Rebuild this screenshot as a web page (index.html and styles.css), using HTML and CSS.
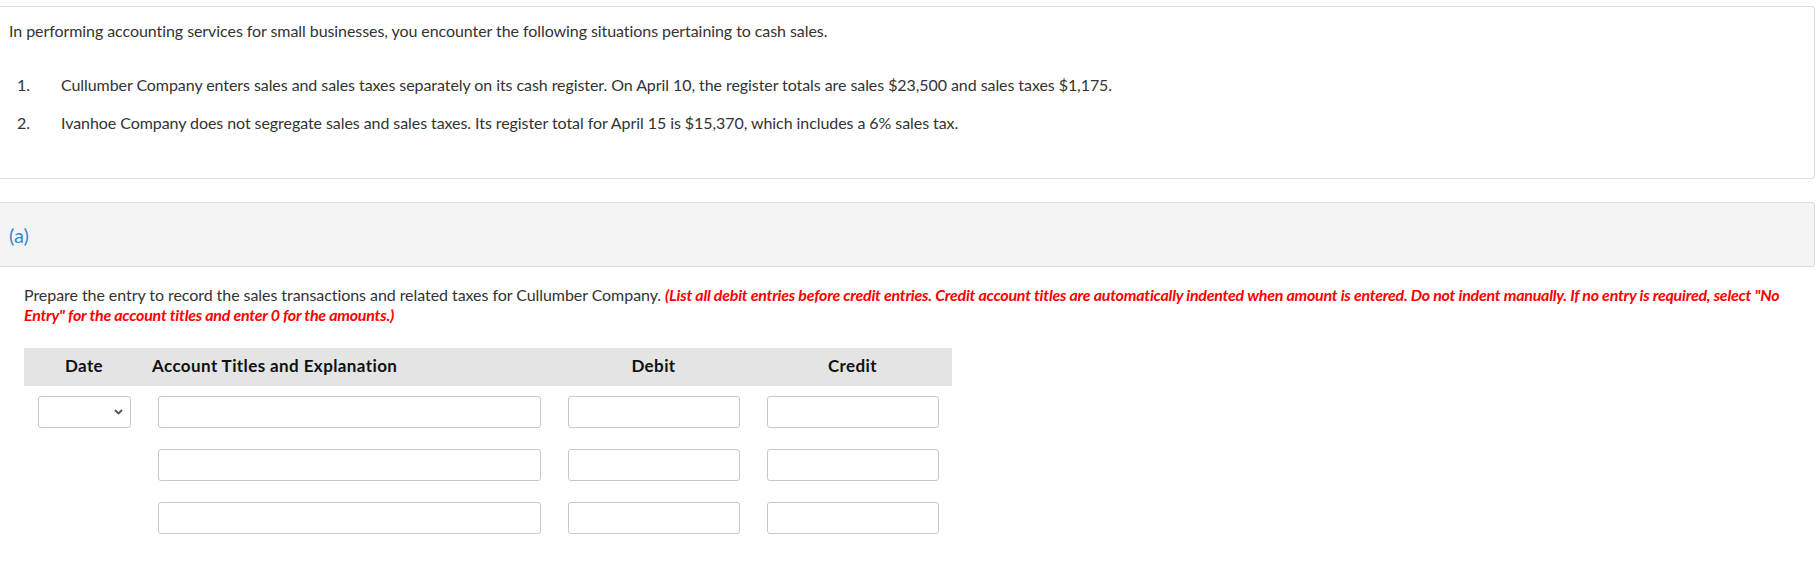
FILE: index.html
```html
<!DOCTYPE html>
<html lang="en">
<head>
<meta charset="utf-8">
<title>Cash sales</title>
<link rel="stylesheet" href="styles.css">
</head>
<body>
<div class="card">
  <p class="intro">In performing accounting services for small businesses, you encounter the following situations pertaining to cash sales.</p>
  <ol class="items">
    <li><span class="num">1.</span><span class="txt">Cullumber Company enters sales and sales taxes separately on its cash register. On April 10, the register totals are sales $23,500 and sales taxes $1,175.</span></li>
    <li><span class="num">2.</span><span class="txt">Ivanhoe Company does not segregate sales and sales taxes. Its register total for April 15 is $15,370, which includes a 6% sales tax.</span></li>
  </ol>
</div>

<div class="part-head"><span class="part-label">(a)</span></div>

<div class="part-body">
  <p class="prompt">Prepare the entry to record the sales transactions and related taxes for Cullumber Company. <em class="note">(List all debit entries before credit entries. Credit account titles are automatically indented when amount is entered. Do not indent manually. If no entry is required, select "No Entry" for the account titles and enter 0 for the amounts.)</em></p>

  <div class="journal">
    <div class="jhead">
      <div class="h-date">Date</div>
      <div class="h-acct">Account Titles and Explanation</div>
      <div class="h-num">Debit</div>
      <div class="h-num">Credit</div>
    </div>
    <div class="jrow">
      <div class="cell"><div class="select"><svg width="9" height="6" viewBox="0 0 9 6"><path d="M1 1 L4.5 4.5 L8 1" fill="none" stroke="#555" stroke-width="1.8"/></svg></div></div>
      <div class="cell"><div class="input"></div></div>
      <div class="cell"><div class="input"></div></div>
      <div class="cell"><div class="input"></div></div>
    </div>
    <div class="jrow">
      <div class="cell"></div>
      <div class="cell"><div class="input"></div></div>
      <div class="cell"><div class="input"></div></div>
      <div class="cell"><div class="input"></div></div>
    </div>
    <div class="jrow">
      <div class="cell"></div>
      <div class="cell"><div class="input"></div></div>
      <div class="cell"><div class="input"></div></div>
      <div class="cell"><div class="input"></div></div>
    </div>
  </div>
</div>
</body>
</html>
```

FILE: styles.css
```css
* { box-sizing: border-box; }

body {
  margin: 0;
  background: #fff;
  font-family: "Lato", "Liberation Sans", sans-serif;
  font-size: 16px;
  color: #333;
}

.card {
  margin: 6px 1px 0 0;
  border: 1px solid #dcdcdc;
  border-left: none;
  border-radius: 0 4px 4px 0;
  padding: 14px 0 44px 9px;
  height: 173px;
  letter-spacing: -0.07px;
}

.intro {
  margin: 0;
  line-height: 20px;
}

.items {
  list-style: none;
  margin: 34px 0 0 0;
  padding: 0;
}

.items li {
  display: flex;
  line-height: 20px;
  margin-bottom: 18px;
}

.items .num {
  width: 52px;
  padding-left: 8px;
  flex: none;
}

.part-head {
  margin: 23px 1px 0 0;
  height: 65px;
  background: #f4f4f4;
  border: 1px solid #dcdcdc;
  border-left: none;
  border-radius: 0 3px 3px 0;
  display: flex;
  align-items: center;
  padding-left: 9px;
}

.part-label {
  color: #2f8ad8;
  font-size: 20px;
  line-height: 24px;
}

.part-body {
  padding: 18px 26px 0 24px;
}

.prompt {
  margin: 0;
  line-height: 20px;
  letter-spacing: -0.06px;
}

.note {
  color: #f00;
  font-weight: bold;
  font-style: italic;
  letter-spacing: -0.24px;
}

.journal {
  margin-top: 23px;
  width: 928px;
}

.jhead, .jrow {
  display: grid;
  grid-template-columns: 120px 410px 199px 199px;
}

.jhead {
  background: #e4e4e4;
  height: 38px;
  align-items: center;
  font-weight: bold;
  font-size: 17px;
  line-height: 20px;
  letter-spacing: 0.4px;
  color: #111;
  padding-bottom: 2px;
}

.h-date { text-align: center; }
.h-acct { padding-left: 8px; }
.h-num { text-align: center; }

.jrow {
  height: 53px;
  padding-top: 10px;
}

.jrow:first-of-type { }

.cell {
  padding: 0 13px 0 14px;
}

.input, .select {
  height: 32px;
  border: 1px solid #c8c8c8;
  border-radius: 3px;
  background: #fff;
}

.select {
  display: flex;
  justify-content: flex-end;
  align-items: center;
  padding-right: 7px;
}
```
